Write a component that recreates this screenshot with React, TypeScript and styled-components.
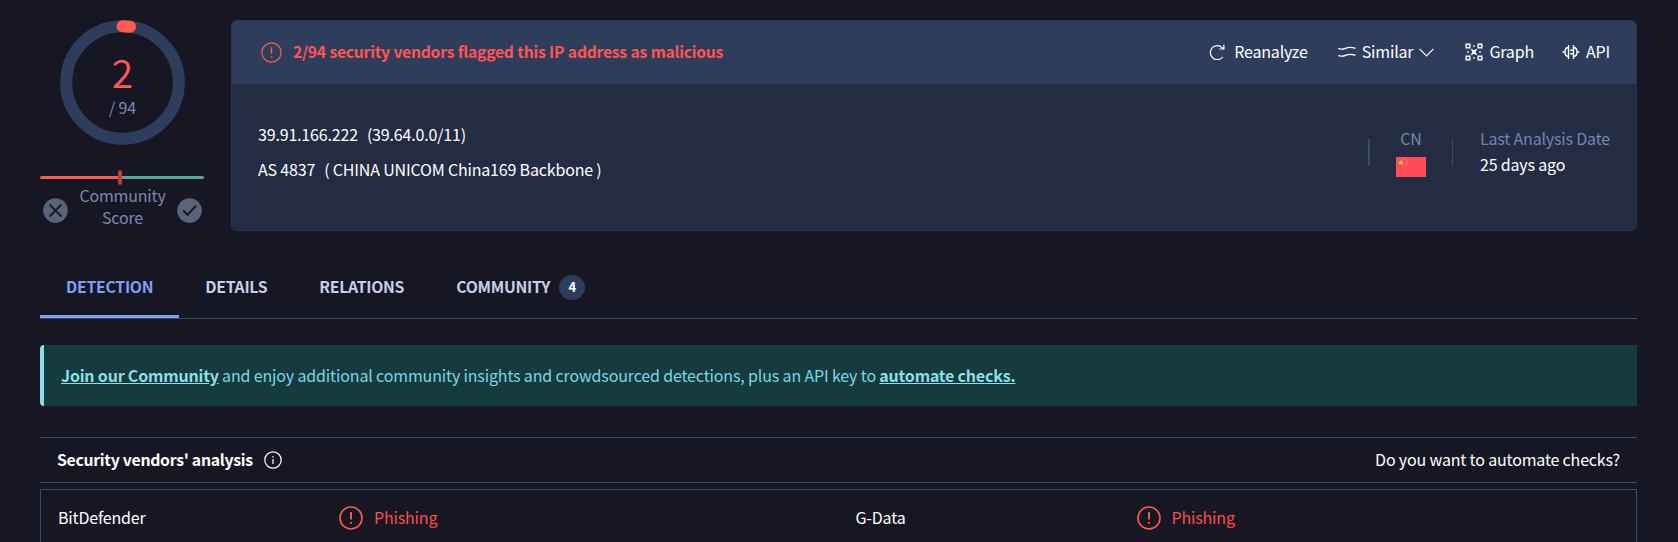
import React from "react";
import styled, { createGlobalStyle } from "styled-components";

const Global = createGlobalStyle`
  *, *::before, *::after { box-sizing: border-box; }
  body {
    margin: 0;
    background: #171723;
    color: #fff;
    font-family: "Noto Sans CJK SC", "Noto Sans", sans-serif;
    font-size: 16px;
    line-height: 24px;
    letter-spacing: -0.175px;
  }
  svg { display: block; flex: none; }
`;

const Page = styled.main`
  height: 542px;
  overflow: hidden;
  padding: 20px 41px 0 40px;
`;

const Label = styled.span<{ $strong?: boolean }>`
  padding-bottom: ${(p) => (p.$strong ? 0 : 2)}px;
`;

const Summary = styled.section`
  display: flex;
  gap: 27px;
  height: 211px;
`;

const ScoreColumn = styled.div`
  width: 164px;
  flex: none;
  display: flex;
  flex-direction: column;
`;

const Gauge = styled.div`
  display: grid;
  place-items: center;
  width: 125px;
  height: 125px;
  margin-left: 20px;
  > * { grid-area: 1 / 1; }
`;

const GaugeText = styled.div`
  display: flex;
  flex-direction: column;
  align-items: center;
  padding-top: 4px;
`;

const Positives = styled.div`
  color: #ff5a50;
  font-size: 39px;
  line-height: 40px;
  font-weight: 350;
`;

const Total = styled.div`
  color: #7c88b1;
  line-height: 24px;
  margin-top: 4px;
`;

const ScoreBar = styled.div`
  display: flex;
  align-items: center;
  height: 15px;
  margin-top: 25px;
`;

const BarPart = styled.div<{ $color: string; $width: number; $left?: boolean }>`
  width: ${(p) => p.$width}px;
  height: 3px;
  background: ${(p) => p.$color};
  border-radius: ${(p) => (p.$left ? "2px 0 0 2px" : "0 2px 2px 0")};
`;

const BarMark = styled.div`
  width: 4px;
  height: 15px;
  border-radius: 2px;
  background: #b93f3b;
`;

const ScoreFooter = styled.div`
  display: flex;
  align-items: center;
  justify-content: space-between;
  padding: 0 2px 0 3px;
  margin-top: -1px;
`;

const ScoreLabel = styled.div`
  color: #7c88b1;
  text-align: center;
  line-height: 22px;
`;

const VoteIcon = styled.svg`
  margin-top: 9px;
`;

const Card = styled.div`
  flex: 1;
  display: flex;
  flex-direction: column;
  border: 1px solid #293551;
  border-radius: 6px;
  background: #242c43;
  overflow: hidden;
`;

const CardHeader = styled.div`
  display: flex;
  align-items: center;
  justify-content: space-between;
  height: 63px;
  padding: 0 26px 1px 29px;
  background: #2f3d5c;
`;

const Verdict = styled.div`
  display: flex;
  align-items: center;
  gap: 11px;
  color: #ff5550;
  font-size: 15.7px;
  font-weight: 700;
  letter-spacing: -0.25px;
  word-spacing: 0.3px;
`;

const Actions = styled.div`
  display: flex;
  align-items: center;
`;

const Action = styled.div<{ $gap?: number; $after?: number }>`
  display: flex;
  align-items: center;
  gap: ${(p) => p.$gap ?? 6}px;
  margin-right: ${(p) => p.$after ?? 0}px;
`;

const CardBody = styled.div`
  flex: 1;
  display: flex;
  justify-content: space-between;
  padding: 38px 26px 0 26px;
`;

const Identity = styled.div`
  display: flex;
  flex-direction: column;
  gap: 11px;
`;

const IdentityRow = styled.div`
  display: flex;
  gap: 9px;
`;

const Facts = styled.div`
  display: flex;
  align-items: flex-start;
  padding-top: 4px;
`;

const Divider = styled.div<{ $w: number }>`
  width: ${(p) => p.$w}px;
  height: 27px;
  margin-top: 13px;
  background: #3a496d;
`;

const Fact = styled.div<{ $center?: boolean }>`
  display: flex;
  flex-direction: column;
  align-items: ${(p) => (p.$center ? "center" : "flex-start")};
  gap: 2px;
  padding-left: ${(p) => (p.$center ? 26 : 27)}px;
  padding-right: ${(p) => (p.$center ? 26 : 0)}px;
`;

const Muted = styled.span`
  color: #7484ab;
`;

const Flag = styled.svg`
  margin-top: 5px;
`;

const Tabs = styled.nav`
  display: flex;
  height: 64px;
  margin-top: 24px;
  border-bottom: 1px solid #3a496d;
`;

const Tab = styled.a<{ $active?: boolean }>`
  display: flex;
  align-items: center;
  gap: 9px;
  height: 63px;
  padding: 1px 26px 0;
  font-size: 15.8px;
  font-weight: 700;
  letter-spacing: -0.28px;
  color: ${(p) => (p.$active ? "#7d9ff5" : "#c5cfe6")};
  box-shadow: ${(p) => (p.$active ? "inset 0 -3px 0 #7d9ff5" : "none")};
`;

const Count = styled.span`
  display: grid;
  place-items: center;
  width: 26px;
  height: 25px;
  margin-top: 1px;
  padding-bottom: 2px;
  border-radius: 13px;
  background: #2f3d5c;
  color: #fff;
  font-size: 13px;
`;

const Banner = styled.div`
  display: flex;
  align-items: center;
  height: 61px;
  margin-top: 26px;
  padding: 0 0 1px 17px;
  border-left: 4px solid #8ddbe3;
  border-radius: 4px 0 0 4px;
  background: #163b3e;
  color: #7cd6e4;
  letter-spacing: -0.15px;
`;

const BannerLink = styled.a`
  font-weight: 700;
  color: #8ddfe6;
  letter-spacing: -0.2px;
  text-decoration: underline;
`;

const SectionHeader = styled.div`
  display: flex;
  align-items: center;
  justify-content: space-between;
  height: 46px;
  margin-top: 31px;
  padding: 0 17px;
  border: solid #3a496d;
  border-width: 1px 0;
`;

const SectionTitle = styled.h2`
  display: flex;
  align-items: center;
  gap: 11px;
  margin: 0;
  font-size: 15.8px;
  font-weight: 700;
  letter-spacing: -0.29px;
`;

const VendorTable = styled.div`
  display: grid;
  grid-template-columns: 1fr 1fr;
  height: 60px;
  margin-top: 6px;
  border: 1px solid #3a496d;
  border-bottom: none;
`;

const Vendor = styled.div`
  display: grid;
  grid-template-columns: 281px 1fr;
  align-items: center;
  height: 56px;
  padding-left: 17px;
`;

const Detection = styled.div`
  display: flex;
  align-items: center;
  gap: 11px;
  color: #ff4d4a;
`;

const Alert = ({ size, weight = 1.3 }: { size: number; weight?: number }) => (
  <svg width={size} height={size} viewBox="0 0 24 24" fill="none" stroke="#ff5a50" strokeWidth={weight}>
    <circle cx="12" cy="12" r="11" />
    <path d="M12 6v7.5M12 16v1.8" strokeWidth={weight + 0.3} />
  </svg>
);

const vendors = [
  { name: "BitDefender", result: "Phishing" },
  { name: "G-Data", result: "Phishing" },
];

const tabs = ["DETECTION", "DETAILS", "RELATIONS"];

export default function App() {
  return (
    <>
      <Global />
      <Page>
        <Summary>
          <ScoreColumn>
            <Gauge>
              <svg width="125" height="125" viewBox="0 0 125 125" fill="none" strokeWidth="12">
                <circle cx="62.5" cy="62.5" r="56.3" stroke="#2f3d5c" />
                <path d="M62.5 6.2A56.3 56.3 0 0 1 70 6.7" stroke="#ff5a50" strokeLinecap="round" />
              </svg>
              <GaugeText>
                <Positives>2</Positives>
                <Total>/ 94</Total>
              </GaugeText>
            </Gauge>
            <ScoreBar>
              <BarPart $color="#ff5a50" $width={78} $left />
              <BarMark />
              <BarPart $color="#54a795" $width={82} />
            </ScoreBar>
            <ScoreFooter>
              <VoteIcon width="25" height="25" viewBox="0 0 25 25">
                <circle cx="12.5" cy="12.5" r="12.3" fill="#59637a" />
                <path d="M7 7l11 11M18 7L7 18" stroke="#171723" strokeWidth="1.8" strokeLinecap="round" />
              </VoteIcon>
              <ScoreLabel>
                Community
                <br />
                Score
              </ScoreLabel>
              <VoteIcon width="25" height="25" viewBox="0 0 25 25">
                <circle cx="12.5" cy="12.5" r="12.3" fill="#59637a" />
                <path d="M6.7 13l3.8 3.8 8-8.4" fill="none" stroke="#171723" strokeWidth="2" strokeLinecap="round" />
              </VoteIcon>
            </ScoreFooter>
          </ScoreColumn>
          <Card>
            <CardHeader>
              <Verdict>
                <Alert size={21} weight={1.4} />
                <Label $strong>2/94 security vendors flagged this IP address as malicious</Label>
              </Verdict>
              <Actions>
                <Action $gap={9} $after={30}>
                  <svg width="16" height="16" viewBox="0 0 16 16" fill="none" stroke="#fff" strokeWidth="1.2">
                    <path d="M13.8 13A7 7 0 1 1 13.2 3.6L14.6 4.8M14.9 .8v4.2h-4.5" />
                  </svg>
                  <Label>Reanalyze</Label>
                </Action>
                <Action $after={31}>
                  <svg width="18" height="12" viewBox="0 0 18 12" fill="none" stroke="#fff" strokeWidth="1.3" strokeLinecap="round">
                    <path d="M.9 2.6C3.5 3.6 5.2 3.4 7.5 2.3S13 .9 17 2.2M.9 9.6c2.6 1 4.3.8 6.6-.3S13 7.9 17 9.2" />
                  </svg>
                  <Label>Similar</Label>
                  <svg width="15" height="9" viewBox="0 0 15 9" fill="none" stroke="#fff" strokeWidth="1.2">
                    <path d="M.6.9l6.9 7 6.9-7" />
                  </svg>
                </Action>
                <Action $after={28}>
                  <svg width="18" height="18" viewBox="0 0 18 18" fill="none" stroke="#fff" strokeWidth="1.5">
                    <path d="M1.2 1.2h3.6v3.6H1.2zM13.2 1.2h3.6v3.6h-3.6zM1.2 13.2h3.6v3.6H1.2zM13.2 13.2h3.6v3.6h-3.6zM6.3 6.3l5.4 5.4M11.7 6.3l-5.4 5.4" />
                    <path d="M7.3 7.3h3.4v3.4h-3.4z" fill="#fff" stroke="none" />
                    <path d="M9 2.2v1.6M9 14.2v1.6M2.2 9h1.6M14.2 9h1.6" strokeWidth="1.6" />
                  </svg>
                  <Label>Graph</Label>
                </Action>
                <Action>
                  <svg width="18" height="16" viewBox="0 0 18 16" fill="none" stroke="#fff" strokeWidth="1.4">
                    <path d="M.5 8h2.5M15 8h2.5M6.5 1v14M11.5 1v14M6.5 3.5C4 3.5 3 5 3 8s1 4.5 3.5 4.5M11.5 3.5C14 3.5 15 5 15 8s-1 4.5-3.5 4.5M8.2 6.3h3.3M8.2 9.7h3.3" />
                  </svg>
                  <Label>API</Label>
                </Action>
              </Actions>
            </CardHeader>
            <CardBody>
              <Identity>
                <IdentityRow>
                  <span>39.91.166.222</span>
                  <span>(39.64.0.0/11)</span>
                </IdentityRow>
                <IdentityRow>
                  <span>AS 4837</span>
                  <span>( CHINA UNICOM China169 Backbone )</span>
                </IdentityRow>
              </Identity>
              <Facts>
                <Divider $w={2} />
                <Fact $center>
                  <Muted>CN</Muted>
                  <Flag width="30" height="20" viewBox="0 0 30 20">
                    <rect width="30" height="20" fill="#ff4b55" />
                    <path d="M5 2.8l.8 1.900 2 .1-1.500 1.300.5 2L5 7.100l-1.800 1 .5-2-1.500-1.300 2-.1z" fill="#ffe15a" />
                    <path d="M8.5 2.5h1M10.5 4.2h1M10.5 6.5h1M8.5 8.5h1" stroke="#ffb05a" strokeWidth="1.2" />
                  </Flag>
                </Fact>
                <Divider $w={1} />
                <Fact>
                  <Muted>Last Analysis Date</Muted>
                  <span>25 days ago</span>
                </Fact>
              </Facts>
            </CardBody>
          </Card>
        </Summary>
        <Tabs>
          {tabs.map((t, i) => (
            <Tab key={t} $active={i === 0}>
              {t}
            </Tab>
          ))}
          <Tab>
            COMMUNITY<Count>4</Count>
          </Tab>
        </Tabs>
        <Banner>
          <span>
            <BannerLink>Join our Community</BannerLink> and enjoy additional community insights and crowdsourced
            detections, plus an API key to <BannerLink>automate checks.</BannerLink>
          </span>
        </Banner>
        <SectionHeader>
          <SectionTitle>
            <Label $strong>Security vendors' analysis</Label>
            <svg width="18" height="18" viewBox="0 0 18 18" fill="none" stroke="#fff" strokeWidth="1.2">
              <circle cx="9" cy="9" r="8.2" />
              <path d="M9 8v5M9 5v1.5" />
            </svg>
          </SectionTitle>
          <Label>Do you want to automate checks?</Label>
        </SectionHeader>
        <VendorTable>
          {vendors.map((v) => (
            <Vendor key={v.name}>
              <Label>{v.name}</Label>
              <Detection>
                <Alert size={24} weight={1.6} />
                <Label>{v.result}</Label>
              </Detection>
            </Vendor>
          ))}
        </VendorTable>
      </Page>
    </>
  );
}
